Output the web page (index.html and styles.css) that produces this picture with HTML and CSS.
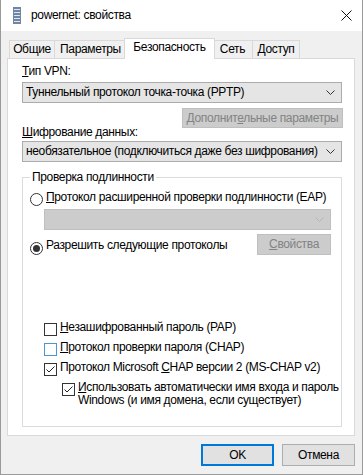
FILE: index.html
```html
<!DOCTYPE html>
<html lang="ru">

<head>
  <meta charset="UTF-8">
  <meta name="viewport" content="width=device-width, initial-scale=1.0">
  <title>powernet: свойства</title>
  <link rel="stylesheet" href="styles.css">
</head>

<body>
  <div class="window">
    <div class="titlebar">
      <svg class="app-icon" width="8" height="17" viewBox="0 0 8 17">
        <rect x="0" y="0" width="8" height="17" fill="#6f86a6"/>
        <rect x="1" y="2" width="6" height="1" fill="#dfe6ef"/>
        <rect x="1" y="5" width="6" height="1" fill="#dfe6ef"/>
        <rect x="1" y="8" width="6" height="1" fill="#dfe6ef"/>
        <rect x="1" y="11" width="6" height="1" fill="#dfe6ef"/>
        <rect x="1" y="14" width="6" height="1" fill="#dfe6ef"/>
      </svg>
      <span class="title">powernet: свойства</span>
      <svg class="close" width="11" height="11" viewBox="0 0 11 11">
        <path d="M0.5 0.5L10.5 10.5M10.5 0.5L0.5 10.5" stroke="#111" stroke-width="1" fill="none"/>
      </svg>
    </div>

    <div class="content">
      <div class="tabs">
        <div class="tab tab-general">Общие</div>
        <div class="tab tab-params">Параметры</div>
        <div class="tab tab-security active">Безопасность</div>
        <div class="tab tab-net">Сеть</div>
        <div class="tab tab-access">Доступ</div>
      </div>

      <div class="panel">
        <div class="label label-vpn"><u>Т</u>ип VPN:</div>
        <div class="combo">
          <span>Туннельный протокол точка-точка (PPTP)</span>
          <svg class="chevron" width="9" height="5" viewBox="0 0 9 5"><path d="M0.5 0.5L4.5 4.5L8.5 0.5" stroke="#333" fill="none"/></svg>
        </div>
        <div class="btn btn-advanced disabled"><span>Дополнит<u>е</u>льные параметры</span></div>
        <div class="label label-enc"><u>Ш</u>ифрование данных:</div>
        <div class="combo combo-enc">
          <span>необязательное (подключиться даже без шифрования)</span>
          <svg class="chevron" width="9" height="5" viewBox="0 0 9 5"><path d="M0.5 0.5L4.5 4.5L8.5 0.5" stroke="#333" fill="none"/></svg>
        </div>

        <fieldset class="auth">
          <legend>Проверка подлинности</legend>

          <div class="radio-row">
            <span class="radio"></span>
            <span><u>П</u>ротокол расширенной проверки подлинности (EAP)</span>
          </div>
          <div class="combo combo-eap disabled">
            <span></span>
            <svg class="chevron" width="9" height="5" viewBox="0 0 9 5"><path d="M0.5 0.5L4.5 4.5L8.5 0.5" stroke="#b4b4b4" fill="none"/></svg>
          </div>

          <div class="allow-row">
            <div class="radio-row">
              <span class="radio checked"></span>
              <span>Разрешить сле<u>д</u>ующие протоколы</span>
            </div>
            <div class="btn btn-props disabled"><span><u>С</u>войства</span></div>
          </div>

          <div class="checks">
            <div class="check-row">
              <span class="check"></span>
              <span><u>Н</u>езашифрованный пароль (PAP)</span>
            </div>
            <div class="check-row">
              <span class="check hover"></span>
              <span><u>П</u>ротокол проверки пароля (CHAP)</span>
            </div>
            <div class="check-row">
              <span class="check">
                <svg width="11" height="11" viewBox="0 0 11 11"><path d="M1.5 5.5L4 8L9.5 2.5" stroke="#222" fill="none"/></svg>
              </span>
              <span>Протокол Microsoft <u>C</u>HAP версии 2 (MS-CHAP v2)</span>
            </div>
            <div class="check-row sub">
              <span class="check">
                <svg width="11" height="11" viewBox="0 0 11 11"><path d="M1.5 5.5L4 8L9.5 2.5" stroke="#222" fill="none"/></svg>
              </span>
              <span class="multi"><u>И</u>спользовать автоматически имя входа и пароль<br>Windows (и имя домена, если существует)</span>
            </div>
          </div>
        </fieldset>
      </div>

      <div class="buttons">
        <div class="btn btn-default"><span>OK</span></div>
        <div class="btn"><span>Отмена</span></div>
      </div>
    </div>
  </div>
</body>

</html>
```

FILE: styles.css
```css
body {
  margin: 0;
  font-family: 'Liberation Sans', Arial, sans-serif;
  font-size: 12px;
  line-height: 15px;
  letter-spacing: -0.35px;
  white-space: nowrap;
  color: #000;
  background: #fff;
}

.window {
  width: 363px;
  height: 475px;
  box-sizing: border-box;
  border: 1px solid #9a9a9a;
  border-top: none;
  background: #f0f0f0;
}

.titlebar {
  height: 31px;
  background: #fff;
  display: flex;
  align-items: center;
}

.app-icon {
  margin-left: 12px;
  margin-top: -1px;
}

.title {
  margin-left: 10px;
  flex: 1;
}

.close {
  margin-right: 10px;
}

.content {
  padding: 7px 7px 0 6px;
}

/* tabs */
.tabs {
  display: flex;
  align-items: flex-end;
  height: 20px;
}

.tab {
  box-sizing: border-box;
  height: 18px;
  border: 1px solid #d9d9d9;
  border-bottom: none;
  margin-left: -1px;
  padding-top: 1px;
  text-align: center;
  background: #f0f0f0;
}

.tab-general { width: 46px; margin-left: 2px; }
.tab-params { width: 73px; }
.tab-security { width: 91px; margin-left: -3px; }
.tab-net { width: 41px; margin-left: -3px; }
.tab-access { width: 48px; }

.tab.active {
  height: 21px;
  margin-bottom: -1px;
  background: #fff;
  position: relative;
  z-index: 1;
}

.panel {
  height: 378px;
  box-sizing: border-box;
  border: 1px solid #d9d9d9;
  background: #fff;
  padding: 0 12px 8px 14px;
  display: flex;
  flex-direction: column;
}

.label-vpn { margin-top: 5px; }
.label-enc { margin-top: -3px; }

.combo {
  box-sizing: border-box;
  height: 21px;
  border: 1px solid #acacac;
  background: #e5e5e5;
  display: flex;
  align-items: center;
  padding: 0 6px 0 3px;
  margin-top: 3px;
}

.combo span {
  flex: 1;
}

.combo-enc {
  margin-top: 1px;
}

.combo.disabled {
  background: #cccccc;
  border-color: #bfbfbf;
}

.btn {
  box-sizing: border-box;
  height: 22px;
  width: 73px;
  border: 1px solid #adadad;
  background: #e1e1e1;
  display: flex;
  align-items: center;
  justify-content: center;
}

.btn.disabled {
  background: #cccccc;
  border-color: #bfbfbf;
  color: #838383;
}

.btn-advanced {
  align-self: flex-end;
  width: 161px;
  height: 20px;
  margin-top: 5px;
  margin-right: -1px;
}

/* group box */
.auth {
  flex: 1;
  margin: 8px 0 0 0;
  padding: 0 10px 0 7px;
  border: 1px solid #dcdcdc;
  min-width: 0;
  display: flex;
  flex-direction: column;
}

.auth legend {
  padding: 0 2px;
}

.radio-row {
  display: flex;
  align-items: flex-start;
  gap: 3px;
  margin-top: 5px;
}

.radio {
  box-sizing: border-box;
  width: 13px;
  height: 13px;
  margin-top: 3px;
  border: 1px solid #333;
  border-radius: 50%;
  background: #fff;
  display: flex;
  align-items: center;
  justify-content: center;
}

.radio.checked::after {
  content: '';
  width: 7px;
  height: 7px;
  border-radius: 50%;
  background: #333;
}

.combo-eap {
  margin-left: 14px;
}

.allow-row {
  display: flex;
  justify-content: space-between;
  align-items: flex-start;
  margin-top: 4px;
}

.allow-row .radio-row {
  margin-top: 4px;
}

.allow-row .radio {
  margin-top: 4px;
}

.btn-props {
  height: 21px;
  width: 74px;
}

.checks {
  margin-top: 65px;
  margin-left: 14px;
  display: flex;
  flex-direction: column;
  gap: 4px;
}

.check-row {
  display: flex;
  align-items: flex-start;
  gap: 3px;
}

.check {
  box-sizing: border-box;
  width: 13px;
  height: 13px;
  margin-top: 3px;
  border: 1px solid #333;
  background: #fff;
  display: flex;
  align-items: center;
  justify-content: center;
}

.check.hover {
  border-color: #4a97d6;
}

.check-row.sub {
  margin-left: 18px;
  margin-top: 1px;
}

.check-row.sub .check {
  margin-top: 2px;
}

.multi {
  line-height: 13px;
}

.buttons {
  display: flex;
  justify-content: flex-end;
  gap: 8px;
  margin-top: 8px;
}

.btn-default {
  border-color: #0078d7;
  box-shadow: inset 0 0 0 1px #0078d7;
}
```
